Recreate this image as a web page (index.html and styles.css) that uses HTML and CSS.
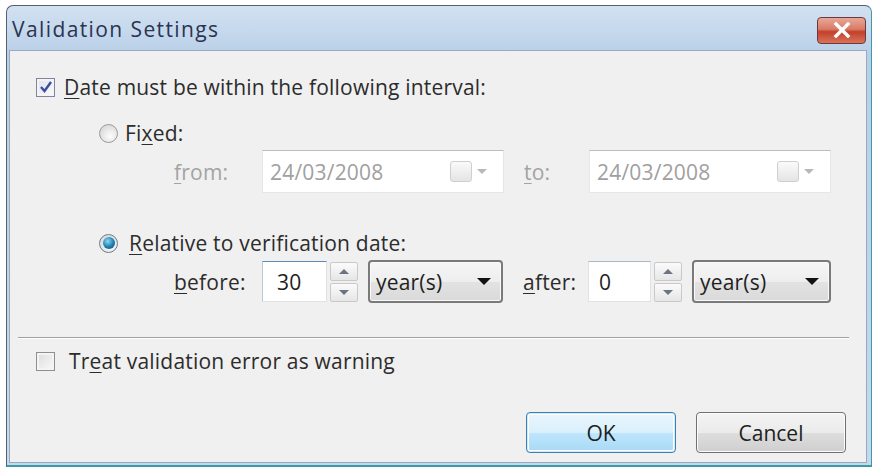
FILE: index.html
```html
<!DOCTYPE html>
<html lang="en">
<head>
    <meta charset="UTF-8">
    <title>Validation Settings</title>
    <link rel="stylesheet" href="styles.css">
</head>
<body>
    <div class="window">
        <div class="titlebar">
            <span class="title">Validation Settings</span>
            <button class="close-btn" aria-label="Close">
                <svg width="20" height="16" viewBox="0 0 20 16">
                    <path d="M4 2 L16 14 M16 2 L4 14" stroke="#fff" stroke-width="3.4" stroke-linecap="square"/>
                </svg>
            </button>
        </div>

        <div class="client">
            <div class="row check-row">
                <span class="checkbox checked">
                    <svg width="14" height="14" viewBox="0 0 14 14">
                        <path d="M2 7 L5.5 11 L12 2" fill="none" stroke="#3b4f9c" stroke-width="2.4"/>
                    </svg>
                </span>
                <span class="label"><u>D</u>ate must be within the following interval:</span>
            </div>

            <div class="row radio-row">
                <span class="radio"></span>
                <span class="label">Fi<u>x</u>ed:</span>
            </div>

            <div class="row field-row disabled">
                <span class="field-label"><u>f</u>rom:</span>
                <div class="date-field">
                    <span>24/03/2008</span>
                    <span class="cal-btn"><span class="cal-icon"></span><span class="cal-arrow"></span></span>
                </div>
                <span class="field-label second"><u>t</u>o:</span>
                <div class="date-field">
                    <span>24/03/2008</span>
                    <span class="cal-btn"><span class="cal-icon"></span><span class="cal-arrow"></span></span>
                </div>
            </div>

            <div class="row radio-row relative">
                <span class="radio selected"><span class="dot"></span></span>
                <span class="label"><u>R</u>elative to verification date:</span>
            </div>

            <div class="row field-row">
                <span class="field-label"><u>b</u>efore:</span>
                <div class="num-input focused">30</div>
                <div class="spinner">
                    <span class="spin up"></span>
                    <span class="spin down"></span>
                </div>
                <div class="select">year(s)<span class="caret"></span></div>

                <span class="field-label second"><u>a</u>fter:</span>
                <div class="num-input narrow">0</div>
                <div class="spinner">
                    <span class="spin up"></span>
                    <span class="spin down"></span>
                </div>
                <div class="select wide">year(s)<span class="caret"></span></div>
            </div>

            <div class="separator"></div>

            <div class="row check-row warn-row">
                <span class="checkbox"></span>
                <span class="label">Tr<u>e</u>at validation error as warning</span>
            </div>

            <div class="buttons">
                <button class="btn default">OK</button>
                <button class="btn">Cancel</button>
            </div>
        </div>
    </div>
</body>
</html>
```

FILE: styles.css
```css
* {
    box-sizing: border-box;
}

body {
    margin: 0;
    background-color: #fff;
    font-family: "Open Sans", "Noto Sans", sans-serif;
    font-size: 21px;
    letter-spacing: 0.2px;
    color: #2c2c2c;
}

u {
    text-decoration-thickness: 1px;
    text-underline-offset: 3px;
}

.window {
    margin: 5px 4px 3px 6px;
    height: 462px;
    border: 1px solid #55606c;
    border-right-color: #3d9ba5;
    border-bottom: 2px solid #3d9ba5;
    border-radius: 7px 7px 0 0;
    background: linear-gradient(#d2e1f1, #b8cfe8 50px, #c5d9ee);
    padding: 0 4px 2px 2px;
    display: flex;
    flex-direction: column;
}

.titlebar {
    height: 44px;
    display: flex;
    align-items: center;
    justify-content: space-between;
    padding: 0 1px 0 3px;
}

.title {
    font-size: 21px;
    letter-spacing: 1.4px;
    color: #2a3450;
    margin-top: 2px;
}

.close-btn {
    width: 49px;
    height: 27px;
    margin-top: 4px;
    border: 1px solid #6b3a3e;
    border-radius: 4px;
    background: linear-gradient(#e8a898, #d97a66 45%, #c3402a 55%, #d8735a);
    display: flex;
    align-items: center;
    justify-content: center;
    padding: 0;
}

.client {
    flex: 1;
    background-color: #f0f0f0;
    border: 1px solid #98aabd;
    padding: 25px 20px 0 26px;
}

.row {
    display: flex;
    align-items: center;
}

.check-row {
    height: 22px;
}

.checkbox {
    width: 19px;
    height: 19px;
    border: 1px solid #8f8f8f;
    background: linear-gradient(135deg, #dcdcdc, #fafafa);
    box-shadow: inset 0 0 0 2px #f4f4f4;
    display: flex;
    align-items: center;
    justify-content: center;
    margin-right: 9px;
}

.checkbox.checked {
    border-color: #7f84a0;
    background: linear-gradient(135deg, #dfe1ee, #fbfbfd);
}

.warn-row .checkbox {
    margin-right: 14px;
}

.radio-row {
    height: 22px;
    margin-top: 24px;
    padding-left: 63px;
}

.radio-row.relative {
    margin-top: 39px;
}

.radio {
    width: 19px;
    height: 19px;
    border-radius: 50%;
    border: 1px solid #9a9a9a;
    background: radial-gradient(circle at 60% 65%, #fdfdfd, #cfcfcf);
    margin-right: 7px;
    display: flex;
    align-items: center;
    justify-content: center;
}

.radio.selected {
    border-color: #6a7c8e;
    margin-right: 11px;
}

.dot {
    width: 12px;
    height: 12px;
    border-radius: 50%;
    background: radial-gradient(circle at 40% 35%, #8fd8f0, #1a7eb0 55%, #0c4a72);
}

.field-row {
    height: 43px;
    margin-top: 6px;
    padding-left: 138px;
}

.field-label {
    width: 88px;
}

.field-label.second {
    width: 65px;
    margin-left: 20px;
}

.disabled {
    color: #a3a3a3;
}

.date-field {
    width: 242px;
    height: 43px;
    background-color: #fff;
    border: 1px solid #e6e6e6;
    border-top-color: #bdbdbd;
    display: flex;
    align-items: center;
    justify-content: space-between;
    padding: 0 16px 0 7px;
    color: #a0a0a0;
}

.cal-btn {
    display: flex;
    align-items: center;
    gap: 5px;
}

.cal-icon {
    width: 22px;
    height: 21px;
    border: 1px solid #cfcfcf;
    border-radius: 3px;
    background: linear-gradient(#fafafa, #e4e4e4);
}

.cal-arrow {
    width: 0;
    height: 0;
    border-left: 5px solid transparent;
    border-right: 5px solid transparent;
    border-top: 5px solid #b8b8b8;
}

.num-input {
    width: 65px;
    height: 41px;
    background-color: #fff;
    border: 1px solid #e2e2e2;
    border-top-color: #a8b8c8;
    display: flex;
    align-items: center;
    padding-left: 14px;
    color: #1e1e1e;
}

.num-input.focused {
    border-top-color: #5d8cb8;
    border-left-color: #b5c9dc;
}

.num-input.narrow {
    width: 63px;
    padding-left: 10px;
}

.spinner {
    display: flex;
    flex-direction: column;
    gap: 2px;
    margin: 0 10px 0 3px;
}

.spin {
    width: 28px;
    height: 19px;
    border: 1px solid #c9c9c9;
    border-radius: 2px;
    background: linear-gradient(#fbfbfb, #e6e6e6);
    display: flex;
    align-items: center;
    justify-content: center;
}

.spin::after {
    content: "";
    width: 0;
    height: 0;
    border-left: 5px solid transparent;
    border-right: 5px solid transparent;
}

.spin.up::after {
    border-bottom: 5px solid #6b7480;
}

.spin.down::after {
    border-top: 5px solid #6b7480;
}

.select {
    width: 135px;
    height: 43px;
    border: 2px solid #7a7a7a;
    border-radius: 4px;
    background: linear-gradient(#f6f6f6, #eeeeee 50%, #e2e2e2 52%, #dadada);
    box-shadow: inset 0 0 0 1px #fafafa;
    display: flex;
    align-items: center;
    justify-content: space-between;
    padding: 0 10px 0 6px;
    color: #1e1e1e;
}

.select.wide {
    width: 139px;
}

.caret {
    width: 0;
    height: 0;
    border-left: 7px solid transparent;
    border-right: 7px solid transparent;
    border-top: 7px solid #111;
}

.separator {
    height: 2px;
    margin: 34px 0 0 -18px;
    border-top: 1px solid #a0a0a0;
    border-bottom: 1px solid #fff;
    width: 831px;
}

.warn-row {
    margin-top: 11px;
}

.buttons {
    display: flex;
    justify-content: flex-end;
    gap: 20px;
    margin-top: 40px;
}

.btn {
    width: 150px;
    height: 41px;
    font-family: inherit;
    font-size: 21px;
    color: #1e1e1e;
    border: 1px solid #707070;
    border-radius: 4px;
    background: linear-gradient(#f4f4f4, #ebebeb 50%, #dddddd 52%, #cfcfcf);
    box-shadow: inset 0 0 0 1px #fcfcfc;
}

.btn.default {
    border-color: #3c7fb1;
    background: linear-gradient(#eaf6fd, #d9f0fc 50%, #bee6fd 52%, #a7d9f5);
    box-shadow: inset 0 0 0 1px #d0ecfb, inset 0 0 0 2px #fff;
}
```
